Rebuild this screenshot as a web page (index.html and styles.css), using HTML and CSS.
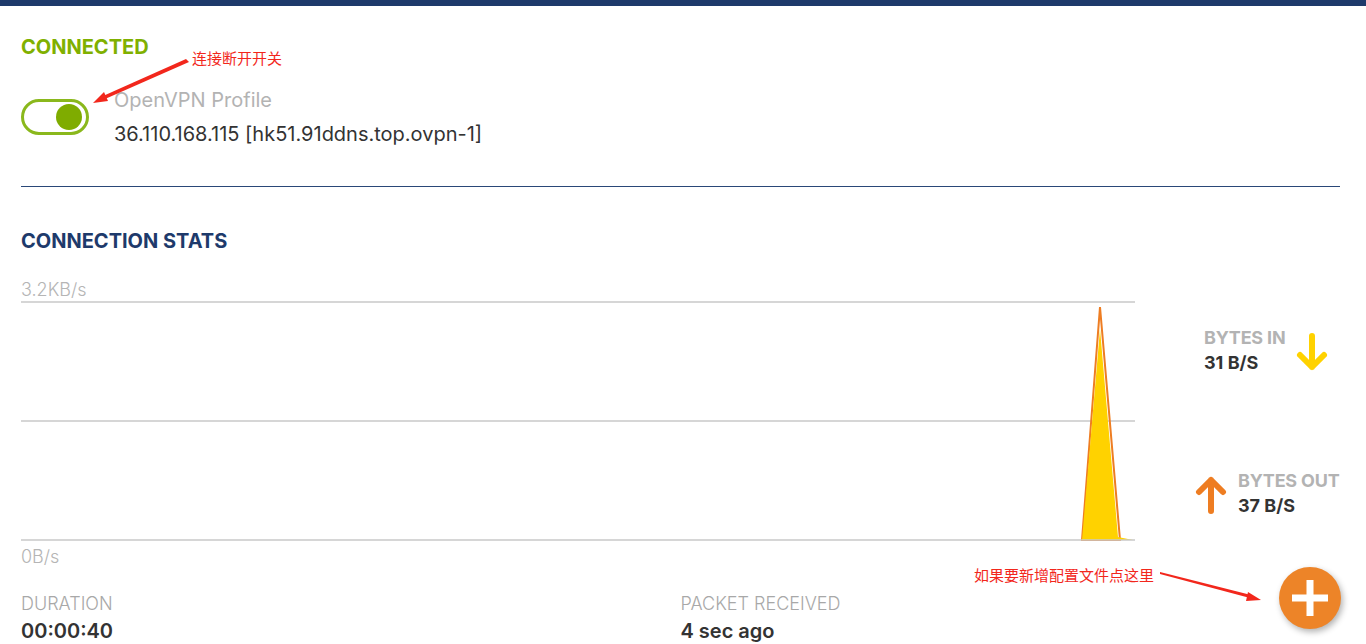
FILE: index.html
```html
<!DOCTYPE html>
<html lang="en">
<head>
  <meta charset="UTF-8">
  <title>OpenVPN Connect</title>
  <link rel="stylesheet" href="styles.css">
</head>
<body>

  <!-- Top bar -->
  <div class="topbar"></div>

  <main class="page">
    <!-- Connection status -->
    <section class="status">
      <h2 class="status-title">CONNECTED</h2>
      <div class="profile-row">
        <div class="toggle"><span class="knob"></span></div>
        <div class="profile-info">
          <p class="profile-name">OpenVPN Profile</p>
          <p class="profile-host">36.110.168.115 [hk51.91ddns.top.ovpn-1]</p>
        </div>
      </div>
    </section>

    <hr class="divider">

    <!-- Stats -->
    <section class="stats">
      <h2 class="stats-title">CONNECTION STATS</h2>
      <div class="chart-row">
        <div class="chart">
          <p class="axis-label">3.2KB/s</p>
          <svg class="chart-svg" width="1114" height="240" viewBox="0 0 1114 240">
            <line x1="0" y1="1" x2="1114" y2="1" stroke="#c8c8c8" stroke-width="1.5"/>
            <line x1="0" y1="120" x2="1114" y2="120" stroke="#c8c8c8" stroke-width="1.5"/>
            <polygon points="1061,239 1079,6 1099,239" fill="none" stroke="#ee7d22" stroke-width="2"/>
            <polygon points="1061,239 1079,28 1097,236 1112,239" fill="#ffd200"/>
            <line x1="0" y1="239" x2="1114" y2="239" stroke="#c8c8c8" stroke-width="1.5"/>
          </svg>
          <p class="axis-label">0B/s</p>
        </div>
        <div class="rates">
          <div class="rate rate-in">
            <div>
              <p class="rate-label">BYTES IN</p>
              <p class="rate-value">31 B/S</p>
            </div>
            <svg width="34" height="40" viewBox="0 0 34 40">
              <path d="M17 4 V35 M5 23 L17 35 L29 23" fill="none" stroke="#ffd200" stroke-width="6" stroke-linecap="round" stroke-linejoin="round"/>
            </svg>
          </div>
          <div class="rate rate-out">
            <svg width="34" height="40" viewBox="0 0 34 40">
              <path d="M17 36 V5 M5 17 L17 5 L29 17" fill="none" stroke="#ee7d22" stroke-width="6" stroke-linecap="round" stroke-linejoin="round"/>
            </svg>
            <div>
              <p class="rate-label">BYTES OUT</p>
              <p class="rate-value">37 B/S</p>
            </div>
          </div>
        </div>
      </div>

      <div class="summary">
        <div class="summary-item">
          <p class="summary-label">DURATION</p>
          <p class="summary-value">00:00:40</p>
        </div>
        <div class="summary-item">
          <p class="summary-label">PACKET RECEIVED</p>
          <p class="summary-value">4 sec ago</p>
        </div>
      </div>
    </section>
  </main>

  <!-- Add profile button -->
  <button class="fab" aria-label="Add profile">
    <svg width="40" height="40" viewBox="0 0 40 40">
      <rect x="16.5" y="2" width="7" height="36" fill="#fff"/>
      <rect x="2" y="16.5" width="36" height="7" fill="#fff"/>
    </svg>
  </button>

  <!-- Annotations -->
  <p class="note note-toggle">连接断开开关</p>
  <p class="note note-fab">如果要新增配置文件点这里</p>
  <svg class="note-arrows" width="1366" height="644" viewBox="0 0 1366 644">
    <polygon points="186,59 189,62 105,99 103,96" fill="#f2271c"/>
    <polygon points="93,103 104,92 108,101" fill="#f2271c"/>
    <polygon points="1160,572 1160,574 1250,598 1251,595" fill="#f2271c"/>
    <polygon points="1261,600 1248,592 1246,601" fill="#f2271c"/>
  </svg>

</body>
</html>
```

FILE: styles.css
```css
/* General */
* {
  margin: 0;
  padding: 0;
  box-sizing: border-box;
}

body {
  font-family: Inter, "Noto Sans", "Noto Sans CJK SC", sans-serif;
  background-color: #fff;
  color: #333;
  width: 1366px;
  height: 644px;
  overflow: hidden;
  position: relative;
}

.topbar {
  height: 6px;
  background-color: #1e3a6b;
}

.page {
  padding: 0 26px 0 21px;
}

/* Status */
.status-title {
  margin-top: 30px;
  font-size: 20px;
  line-height: 22px;
  font-weight: 700;
  color: #80b000;
}

.profile-row {
  display: flex;
  align-items: flex-start;
  margin-top: 25px;
}

.toggle {
  width: 68px;
  height: 36px;
  margin-top: 16px;
  margin-right: 25px;
  border: 3px solid #8ab81c;
  border-radius: 18px;
  display: flex;
  align-items: center;
  justify-content: flex-end;
  padding-right: 4px;
}

.knob {
  width: 26px;
  height: 26px;
  border-radius: 50%;
  background-color: #7fac00;
}

.profile-info p {
  font-size: 20px;
  line-height: 34px;
}

.profile-name {
  color: #b3b3b3;
}

.profile-host {
  color: #333;
}

.divider {
  border: none;
  border-top: 1px solid #2a4878;
  margin-top: 35px;
}

/* Stats */
.stats-title {
  margin-top: 43px;
  font-size: 20px;
  line-height: 22px;
  font-weight: 700;
  color: #1e3a6b;
}

.chart-row {
  display: flex;
  margin-top: 28px;
}

.chart {
  width: 1114px;
}

.axis-label {
  font-size: 18px;
  line-height: 20px;
  color: #b5b5b5;
  font-weight: 300;
}

.chart-svg {
  display: block;
  margin: 1px 0 6px;
}

.rates {
  flex: 1;
}

.rate {
  display: flex;
  align-items: center;
  gap: 10px;
}

.rate-in {
  margin-top: 47px;
  margin-left: 69px;
}

.rate-out {
  margin-top: 93px;
  margin-left: 59px;
}

.rate-label {
  font-size: 18px;
  line-height: 22px;
  font-weight: 700;
  color: #b3b3b3;
  letter-spacing: -0.2px;
}

.rate-value {
  font-size: 18px;
  line-height: 28px;
  font-weight: 700;
  color: #333;
}

/* Summary */
.summary {
  display: flex;
  margin-top: 27px;
}

.summary-item {
  width: 660px;
}

.summary-label {
  font-size: 18px;
  line-height: 20px;
  font-weight: 300;
  color: #a8a8a8;
}

.summary-value {
  margin-top: 5px;
  font-size: 20px;
  line-height: 24px;
  font-weight: 600;
  color: #333;
}

/* Floating button */
.fab {
  position: absolute;
  left: 1279px;
  top: 567px;
  width: 62px;
  height: 62px;
  border: none;
  border-radius: 50%;
  background-color: #ed8428;
  box-shadow: 2px 3px 6px rgba(0, 0, 0, 0.3);
  display: flex;
  align-items: center;
  justify-content: center;
  cursor: pointer;
}

.fab svg {
  display: block;
}

/* Annotations */
.note {
  position: absolute;
  font-size: 15px;
  line-height: 18px;
  color: #f2271c;
  font-family: "Noto Sans CJK SC", sans-serif;
}

.note-toggle {
  left: 192px;
  top: 49px;
}

.note-fab {
  left: 974px;
  top: 566px;
}

.note-arrows {
  position: absolute;
  left: 0;
  top: 0;
  pointer-events: none;
}
```
